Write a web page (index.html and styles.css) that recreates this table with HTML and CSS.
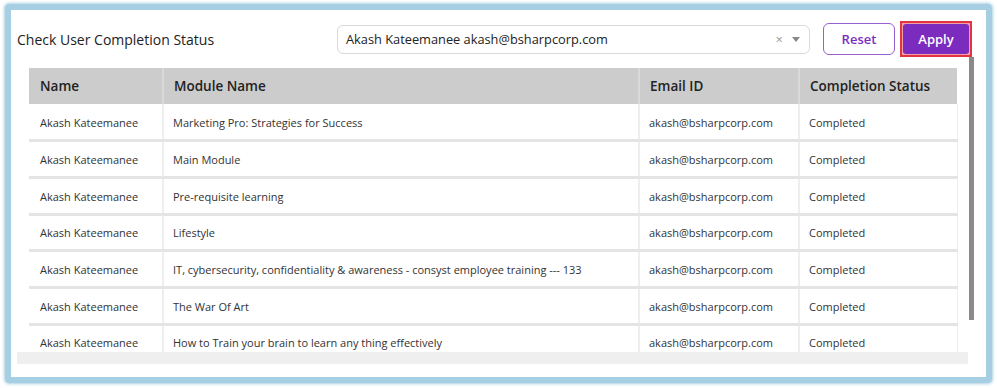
FILE: index.html
```html
<!DOCTYPE html>
<html>
<head>
<meta charset="utf-8">
<link rel="stylesheet" href="styles.css">
</head>
<body>
<div class="frame">
  <div class="card">
    <div class="toolbar">
      <div class="title">Check User Completion Status</div>
      <div class="controls">
        <div class="select">
          <span class="select-value">Akash Kateemanee akash@bsharpcorp.com</span>
          <span class="select-clear">×</span>
          <span class="select-caret"></span>
        </div>
        <button class="btn btn-reset">Reset</button>
        <div class="apply-outline"><button class="btn btn-apply">Apply</button></div>
      </div>
    </div>
    <div class="scroll">
      <div class="viewport">
        <div class="clip">
          <table class="grid">
            <colgroup>
              <col class="c1"><col class="c2"><col class="c3"><col class="c4">
            </colgroup>
            <thead>
              <tr><th>Name</th><th>Module Name</th><th>Email ID</th><th>Completion Status</th></tr>
            </thead>
            <tbody>
              <tr><td>Akash Kateemanee</td><td>Marketing Pro: Strategies for Success</td><td>akash@bsharpcorp.com</td><td>Completed</td></tr>
              <tr><td>Akash Kateemanee</td><td>Main Module</td><td>akash@bsharpcorp.com</td><td>Completed</td></tr>
              <tr><td>Akash Kateemanee</td><td>Pre-requisite learning</td><td>akash@bsharpcorp.com</td><td>Completed</td></tr>
              <tr><td>Akash Kateemanee</td><td>Lifestyle</td><td>akash@bsharpcorp.com</td><td>Completed</td></tr>
              <tr><td>Akash Kateemanee</td><td>IT, cybersecurity, confidentiality &amp; awareness - consyst employee training --- 133</td><td>akash@bsharpcorp.com</td><td>Completed</td></tr>
              <tr><td>Akash Kateemanee</td><td>The War Of Art</td><td>akash@bsharpcorp.com</td><td>Completed</td></tr>
              <tr><td>Akash Kateemanee</td><td>How to Train your brain to learn any thing effectively</td><td>akash@bsharpcorp.com</td><td>Completed</td></tr>
            </tbody>
          </table>
        </div>
        <div class="hbar"></div>
      </div>
      <div class="vbar"><div class="vthumb"></div></div>
    </div>
  </div>
</div>
</body>
</html>
```
FILE: styles.css
```css
* { box-sizing: border-box; }
html, body { margin: 0; padding: 0; background: #ffffff; }
body { font-family: "Open Sans", "Liberation Sans", sans-serif; color: #222; }

.frame {
  margin: 4px 5px 5px 5px;
  width: 987px;
  height: 379px;
  border: 6px solid #a6cfe4;
  border-radius: 4px;
  box-shadow: 0 0 3px 1px rgba(140, 190, 215, 0.7);
}
.card {
  height: 100%;
  background: #fff;
  border-radius: 0 0 10px 0;
  padding: 11px 11px 13px 6px;
  display: flex;
  flex-direction: column;
}

.toolbar {
  display: flex;
  align-items: center;
  justify-content: space-between;
  height: 36px;
  padding-right: 3px;
}
.title { font-size: 14px; color: #222; padding-top: 1px; }
.controls { display: flex; align-items: center; }
.select {
  width: 473px;
  height: 29px;
  border: 1px solid #d9d9d9;
  border-radius: 6px;
  display: flex;
  align-items: center;
  padding: 0 8px 0 8px;
}
.select-value { flex: 1; font-size: 12.8px; color: #222; }
.select-clear { color: #999; font-size: 13px; margin-right: 9px; line-height: 1; }
.select-caret {
  width: 0; height: 0;
  border-left: 4px solid transparent;
  border-right: 4px solid transparent;
  border-top: 5px solid #888;
  margin-right: 1px;
}
.btn {
  font-family: inherit;
  font-size: 13px;
  font-weight: 600;
  border-radius: 6px;
  cursor: pointer;
}
.btn-reset {
  margin-left: 13px;
  width: 72px;
  height: 32px;
  background: #fff;
  color: #7b2cbf;
  border: 1px solid #9a5fcf;
}
.apply-outline {
  margin-left: 5px;
  width: 72px;
  height: 36px;
  border: 2px solid #e3333f;
  background: #f0a0a8;
  padding: 1px;
}
.btn-apply {
  width: 100%;
  height: 100%;
  background: #7b2cbf;
  color: #fff;
  border: 0;
  border-radius: 3px;
}

.scroll {
  margin-top: 0;
  height: 307px;
  display: flex;
}
.viewport { flex: 1; display: flex; flex-direction: column; min-width: 0; }
.clip { flex: 1; overflow: hidden; padding: 11px 11px 0 12px; }
.hbar { height: 12px; background: #efefef; }
.vbar { width: 7px; padding: 0 1px 0 1px; }
.vthumb { width: 5px; height: 263px; background: #8a8a8a; }

.grid {
  width: 928px;
  border-collapse: collapse;
  table-layout: fixed;
}
.c1 { width: 134px; }
.c2 { width: 476px; }
.c3 { width: 160px; }
.c4 { width: 158px; }
.grid th {
  background: #cccccc;
  height: 36px;
  text-align: left;
  font-size: 13.5px;
  font-weight: 600;
  color: #222;
  padding: 0 9px 0 10px;
  border-left: 2px solid #d9d9d9;
}
.grid th:first-child { border-left: 0; padding-left: 11px; }
.grid td {
  height: 36.7px;
  font-size: 11px;
  color: #333;
  padding: 1px 9px 0 9px;
  border-bottom: 3px solid #e4e4e4;
  border-left: 2px solid #eeeeee;
  white-space: nowrap;
  overflow: hidden;
}
.grid td:first-child { border-left: 0; padding-left: 11px; }
.grid td:last-child { border-right: 1px solid #eeeeee; }
```
